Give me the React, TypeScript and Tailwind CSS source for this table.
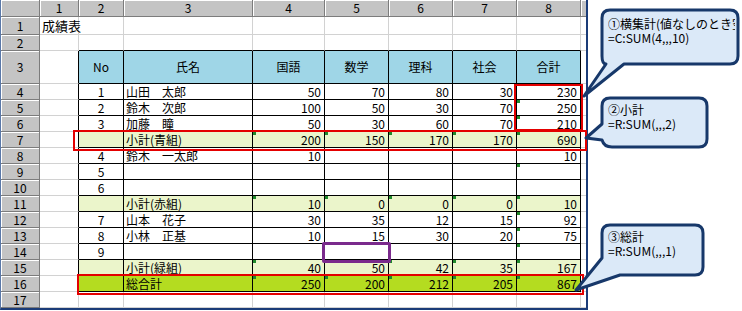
import React from 'react';

const colW = ['w-[39px]', 'w-[45px]', 'w-[129px]', 'w-[72px]', 'w-[64px]', 'w-[64px]', 'w-[64px]', 'w-[64px]'];

function rowH(r: number) {
  if (r === 1) return 'h-[18px]';
  if (r === 3) return 'h-[33px]';
  return 'h-[16px]';
}

interface RowI {
  no?: string;
  name?: string;
  vals?: string[];
}

const heads = ['No', '氏名', '国語', '数学', '理科', '社会', '合計'];

const data: Record<number, RowI> = {
  4: { no: '1', name: '山田　太郎', vals: ['50', '70', '80', '30', '230'] },
  5: { no: '2', name: '鈴木　次郎', vals: ['100', '50', '30', '70', '250'] },
  6: { no: '3', name: '加藤　瞳', vals: ['50', '30', '60', '70', '210'] },
  7: { name: '小計(青組)', vals: ['200', '150', '170', '170', '690'] },
  8: { no: '4', name: '鈴木　一太郎', vals: ['10', '', '', '', '10'] },
  9: { no: '5' },
  10: { no: '6' },
  11: { name: '小計(赤組)', vals: ['10', '0', '0', '0', '10'] },
  12: { no: '7', name: '山本　花子', vals: ['30', '35', '12', '15', '92'] },
  13: { no: '8', name: '小林　正基', vals: ['10', '15', '30', '20', '75'] },
  14: { no: '9' },
  15: { name: '小計(緑組)', vals: ['40', '50', '42', '35', '167'] },
  16: { name: '総合計', vals: ['250', '200', '212', '205', '867'] },
};

// cells with the little green error marker
const marks = new Set([
  '5-8', '6-8', '7-4', '7-5', '7-6', '7-7', '7-8', '9-8',
  '11-4', '11-5', '11-6', '11-7', '11-8', '12-8', '13-8', '14-8',
  '15-4', '15-5', '15-6', '15-7', '15-8', '16-4', '16-5', '16-6', '16-7', '16-8',
]);

function Cell({ r, c }: { r: number; c: number }) {
  const inTable = r >= 3 && r <= 16 && c >= 2;
  const rightDark = inTable || (c === 1 && r >= 3 && r <= 16);
  const bottomDark = inTable || (r === 2 && c >= 2);

  let bg = 'bg-white';
  if (inTable && r === 3) bg = 'bg-[#9fd6e7]';
  else if (inTable && (r === 7 || r === 11 || r === 15)) bg = 'bg-[#ebf5cb]';
  else if (inTable && r === 16) bg = 'bg-[#b4dc20]';

  let text = '';
  let align = 'justify-end pr-[3px]';
  if (r === 1 && c === 1) {
    text = '成績表';
    align = 'justify-start pl-[2px]';
  } else if (r === 3 && c >= 2) {
    text = heads[c - 2];
    align = 'justify-center';
  } else if (data[r]) {
    const d = data[r];
    if (c === 2) {
      text = d.no ?? '';
      align = 'justify-center';
    } else if (c === 3) {
      text = d.name ?? '';
      align = 'justify-start pl-[2px]';
    } else if (c >= 4 && d.vals) {
      text = d.vals[c - 4];
    }
  }

  return (
    <div
      className={`relative flex items-center shrink-0 whitespace-nowrap border-r border-b ${colW[c - 1]} ${bg} ${align}
      ${rightDark ? 'border-r-black' : 'border-r-[#d2d2d2]'} ${bottomDark ? 'border-b-black' : 'border-b-[#d2d2d2]'}`}
    >
      {marks.has(`${r}-${c}`) && <span className="absolute left-0 top-0 w-[3px] h-[3px] bg-[#1f8a2c]" />}
      <span className={r === 1 ? 'relative z-10 text-[13px]' : ''}>{text}</span>
    </div>
  );
}

function Sheet() {
  const rows = Array.from({ length: 17 }, (_, i) => i + 1);
  const cols = Array.from({ length: 8 }, (_, i) => i + 1);
  return (
    <div className="w-[588px] border-l border-l-[#5a78a8] border-r-2 border-r-[#1b3c78] border-b-2 border-b-[#1b3c78]">
      <div className="flex h-[17px]">
        <div className="w-[39px] shrink-0 bg-[#c4c4c4] border-r border-b border-[#7c7c7c] shadow-[inset_1px_1px_0_#ffffff]" />
        {cols.map((c) => (
          <div
            key={c}
            className={`${colW[c - 1]} shrink-0 flex items-center justify-center bg-[#c4c4c4] border-r border-b border-[#7c7c7c] shadow-[inset_1px_1px_0_#ffffff]`}
          >
            {c}
          </div>
        ))}
        <div className="flex-1 bg-[#c4c4c4] border-b border-[#7c7c7c] shadow-[inset_1px_1px_0_#ffffff]" />
      </div>
      {rows.map((r) => (
        <div key={r} className={`flex ${rowH(r)}`}>
          <div className="w-[39px] shrink-0 flex items-center justify-center bg-[#c4c4c4] border-r border-b border-[#7c7c7c] shadow-[inset_1px_1px_0_#ffffff]">
            {r}
          </div>
          {cols.map((c) => (
            <Cell key={c} r={r} c={c} />
          ))}
          <div className="flex-1 bg-white border-b border-b-[#d2d2d2]" />
        </div>
      ))}
    </div>
  );
}

function Balloons() {
  return (
    <svg className="absolute left-0 top-0" width="742" height="311" viewBox="0 0 742 311">
      <g fill="#dbe9f8" stroke="#17386a" strokeWidth="3" strokeLinejoin="round">
        <path d="M610 10 H730 Q738 10 738 18 V56 Q738 64 730 64 H624 L584 96 L606 64 Q602 64 602 56 V18 Q602 10 610 10 Z" />
        <path d="M610 98 H699 Q707 98 707 106 V139 Q707 147 699 147 H612 Q604 147 602 140 L586 138 L602 124 V106 Q602 98 610 98 Z" />
        <path d="M610 225 H695 Q703 225 703 233 V267 Q703 275 695 275 H620 L576 290 L602 258 V233 Q602 225 610 225 Z" />
      </g>
    </svg>
  );
}

export default function App() {
  return (
    <div className="relative w-[742px] h-[311px] overflow-hidden bg-white text-black text-[12px] leading-none font-['Noto_Sans_CJK_JP',sans-serif]">
      <Sheet />

      {/* red highlight boxes */}
      <div className="absolute left-[514px] top-[84px] w-[69px] h-[47px] border-2 border-[#e40000]" />
      <div className="absolute left-[73px] top-[130px] w-[514px] h-[21px] border-2 border-[#e40000]" />
      <div className="absolute left-[77px] top-[274px] w-[507px] h-[21px] border-2 border-[#e40000]" />

      {/* invalid input marker */}
      <div className="absolute left-[322px] top-[242px] w-[69px] h-[21px] border-[3px] border-[#7a2a8c] rounded-[2px]" />

      <Balloons />

      <div className="absolute left-[608px] top-[17px] w-[127px] overflow-hidden whitespace-nowrap leading-[14px]">
        <div>①横集計(値なしのとき空</div>
        <div>=C:SUM(4,,,10)</div>
      </div>
      <div className="absolute left-[608px] top-[103px] whitespace-nowrap leading-[14px]">
        <div>②小計</div>
        <div>=R:SUM(,,,2)</div>
      </div>
      <div className="absolute left-[608px] top-[230px] whitespace-nowrap leading-[14px]">
        <div>③総計</div>
        <div>=R:SUM(,,,1)</div>
      </div>
    </div>
  );
}
